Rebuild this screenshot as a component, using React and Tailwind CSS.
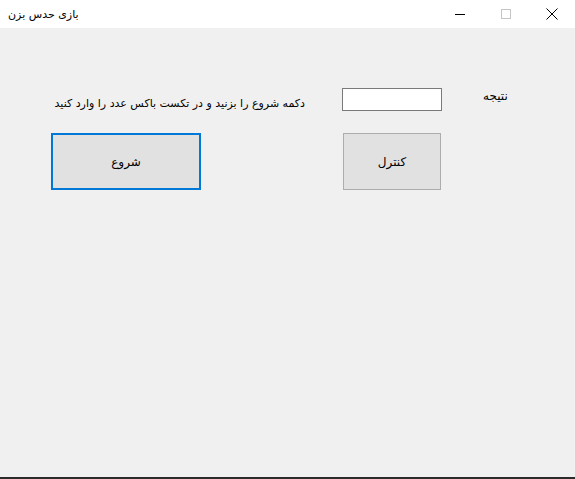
import React from "react";

export default function App() {
  return (
    <div
      className="w-[575px] h-[479px] flex flex-col bg-[#f0f0f0] overflow-hidden"
      style={{ fontFamily: '"DejaVu Sans", "Noto Sans", sans-serif' }}
    >
      {/* title bar */}
      <div className="h-[28px] bg-white flex items-center shrink-0">
        <div dir="rtl" className="ml-[8px] text-[11px] text-black leading-none">
          بازی حدس بزن
        </div>
        <div className="ml-auto flex h-full">
          <button className="w-[46px] h-full flex items-center justify-center">
            <svg width="12" height="12" viewBox="0 0 12 12">
              <path d="M1 6.5h10" stroke="#000" strokeWidth="1" />
            </svg>
          </button>
          <button className="w-[46px] h-full flex items-center justify-center">
            <svg width="12" height="12" viewBox="0 0 12 12">
              <rect x="1.5" y="1.5" width="9" height="9" fill="none" stroke="#c4c4c4" strokeWidth="1" />
            </svg>
          </button>
          <button className="w-[46px] h-full flex items-center justify-center">
            <svg width="12" height="12" viewBox="0 0 12 12">
              <path d="M0.5 0.5L11.5 11.5M11.5 0.5L0.5 11.5" stroke="#000" strokeWidth="1" />
            </svg>
          </button>
        </div>
      </div>

      {/* form body */}
      <div className="flex-1 flex flex-col">
        <div className="flex items-start">
          <div className="w-[305px] mt-[68px] flex justify-end">
            <span dir="rtl" className="text-[11px] leading-[16px] text-black whitespace-nowrap">
              دکمه شروع را بزنید و در تکست باکس عدد را وارد کنید
            </span>
          </div>
          <input
            className="ml-[37px] mt-[60px] w-[100px] h-[23px] bg-white border border-[#7a7a7a] outline-none"
          />
          <span dir="rtl" className="ml-[41px] mt-[60px] text-[12px] leading-[16px] text-black">
            نتیجه
          </span>
        </div>

        <div className="flex items-start mt-[21px]">
          <button
            dir="rtl"
            className="ml-[51px] w-[150px] h-[57px] bg-[#e1e1e1] border-2 border-[#0078d7] text-[12px] text-black flex items-center justify-center"
          >
            شروع
          </button>
          <button
            dir="rtl"
            className="ml-[142px] w-[98px] h-[57px] bg-[#e1e1e1] border border-[#adadad] text-[12px] text-black flex items-center justify-center"
          >
            کنترل
          </button>
        </div>
      </div>

      <div className="h-[2px] bg-[#2b2b2b] shrink-0" />
    </div>
  );
}
